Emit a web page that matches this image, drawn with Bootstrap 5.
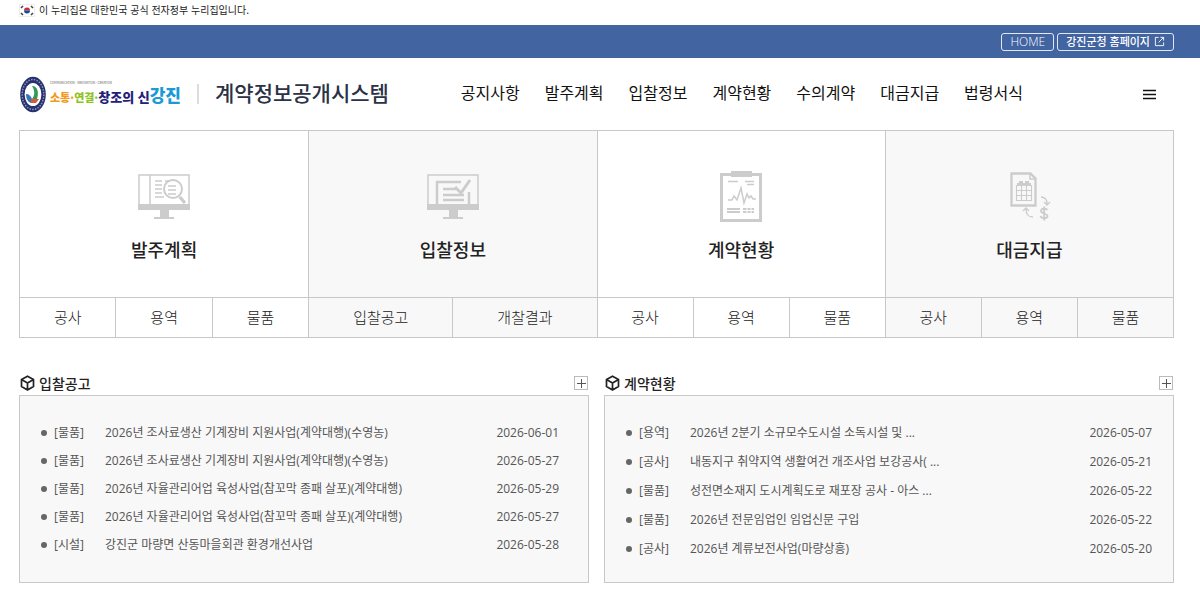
<!DOCTYPE html>
<html lang="ko">
<head>
<meta charset="utf-8">
<meta name="viewport" content="width=device-width, initial-scale=1">
<title>계약정보공개시스템</title>
<link href="https://cdn.jsdelivr.net/npm/bootstrap@5.3.0/dist/css/bootstrap.min.css" rel="stylesheet">
<style>
body{font-family:"Open Sans","Noto Sans CJK KR",sans-serif;color:#222;background:#fff}
a{color:inherit;text-decoration:none}
.wrap{padding-left:19px;padding-right:26px}
.gov-line{height:25px;font-size:10px;line-height:20px;color:#222}
.kr{font-family:"Noto Sans CJK KR",sans-serif}
.top-bar{background:#4264a1;height:33px;gap:3px}
.top-btn{border:1px solid #dfe8f8;border-radius:3px;height:18px;line-height:16px;color:#fff;padding:0 8px;font-size:11px;font-weight:500}
.top-btn.home{font-size:12px;font-weight:300}
.site-head{height:72px}
.brand{gap:3px}
.slogan{font-weight:900;line-height:20px;white-space:nowrap}
.slogan .s{font-size:11px}.slogan .m{font-size:13px}.slogan .l{font-size:17px}
.tagline{font-size:3px;line-height:4px;color:#555;white-space:nowrap}
.c-or{color:#f39a1e}.c-gr{color:#8dc21f}.c-nv{color:#232078}.c-sk{color:#1b9ad6}
.bar-sep{width:2px;height:20px;background:#ddd}
.site-name{font-size:21px;line-height:28px;font-weight:500;color:#2b3245;white-space:nowrap;padding-bottom:4px}
.main-nav{gap:25px;font-size:16px;line-height:24px;font-weight:400;color:#111;white-space:nowrap;padding-bottom:4px}
.menu-btn{margin-left:120px;margin-right:18px}
.board{border:1px solid #c8c8c8}
.tile{border-left:1px solid #c8c8c8}
.tile:first-child{border-left:0}
.tile:nth-child(even){background:#f8f8f8}
.tile-top{height:166px;padding-top:38px}
.tile-top span{font-size:18px;line-height:26px;font-weight:500;margin-top:13px}
.tile-sub{border-top:1px solid #c8c8c8;height:40px;font-size:15px;line-height:38px;color:#222;font-weight:300}
.tile-sub a{flex:1 1 0;text-align:center;border-left:1px solid #c8c8c8}
.tile-sub a:first-child{border-left:0}
.panels{padding-top:35px;gap:15px}
.panels section{flex:1 1 0;min-width:0}
.panel-head{height:22px;padding-bottom:2px}
.panel-head h2{font-size:14px;line-height:20px;font-weight:500;margin:0;color:#222}
.more{width:14px;height:14px;border:1px solid #bbb;background:#fff;padding:0;margin-right:1px}
.panel-box{border:1px solid #c8c8c8;background:#f8f8f8;min-height:188px;padding:23px 29px 0 21px;font-size:12px;color:#555;margin:0;list-style:none}
.panel-box li{display:flex;align-items:center;height:28px;line-height:28px}
.panel-box.wide{padding-top:22px;padding-right:21px}
.panel-box.wide li{height:29px;line-height:29px}
.panel-box li::before{content:"";width:6px;height:6px;border-radius:50%;background:#666;margin-right:7px;flex:none}
.kind{width:51px;flex:none}
.panel-box time{margin-left:auto}
</style>
</head>
<body>
<div class="wrap gov-line d-flex kr">
  <svg class="me-1 mt-1" width="16" height="13" viewBox="0 0 16 13" aria-hidden="true"><rect x=".5" y=".5" width="15" height="12" fill="#fff" stroke="#eee"/><path d="M5 6.500a3 3 0 0 1 6 0z" fill="#cd2e3a"/><path d="M5 6.500a3 3 0 0 0 6 0z" fill="#0f4c9c"/><path d="M2 4l2-2M12 2l2 2M2 9l2 2M12 11l2-2" stroke="#444" stroke-width="1.600"/></svg>
  <span>이 누리집은 대한민국 공식 전자정부 누리집입니다.</span>
</div>
<div class="wrap top-bar d-flex align-items-center justify-content-end">
  <a class="top-btn home" href="#">HOME</a>
  <a class="top-btn d-flex align-items-center" href="#">강진군청 홈페이지
    <svg class="ms-1" width="11" height="11" viewBox="0 0 12 12" fill="none" stroke="#fff"><path d="M5 1.500H1.500v9h9V7M7 1.500h3.500V5M10.500 1.500L5 7"/></svg></a>
</div>
<header class="wrap site-head d-flex align-items-center">
  <a class="brand d-flex align-items-center kr" href="#">
    <svg width="28" height="37" viewBox="0 0 28 37" aria-hidden="true"><ellipse cx="14" cy="18.500" rx="12.800" ry="17.800" fill="#27316f"/><ellipse cx="14" cy="18.500" rx="10.800" ry="15" fill="none" stroke="#8f97bd" stroke-width="1.400" stroke-dasharray="1.500 1.300"/><ellipse cx="14" cy="18.500" rx="8.400" ry="11.500" fill="#fff"/><path d="M13 10c6 0 7 7 5 13h-5c3-4 3-8 0-13z" fill="#2f9b57"/><path d="M7 18c3 0 5 2 6 5l-1 4c-3-1-5-4-5-9z" fill="#3677b8"/><path d="M12 23h8l-3 4h-5z" fill="#d9573c"/></svg>
    <span class="d-flex flex-column">
      <span class="tagline">COMMUNICATION · INNOVATION · CREATION</span>
      <span class="slogan"><span class="s c-or">소통·</span><span class="s c-gr">연결·</span><span class="m c-nv">창조의 신</span><span class="l c-sk">강진</span></span>
    </span>
  </a>
  <span class="bar-sep ms-3 me-3"></span>
  <a class="site-name kr" href="#">계약정보공개시스템</a>
  <nav class="main-nav d-flex kr ms-auto">
    <a href="#">공지사항</a><a href="#">발주계획</a><a href="#">입찰정보</a><a href="#">계약현황</a><a href="#">수의계약</a><a href="#">대금지급</a><a href="#">법령서식</a>
  </nav>
  <button class="menu-btn btn p-0 border-0 d-flex" type="button" aria-label="전체메뉴"><svg width="13" height="11" viewBox="0 0 13 11" stroke="#111" stroke-width="1.700"><path d="M0 1.500h13M0 5.500h13M0 9.500h13"/></svg></button>
</header>
<main class="wrap">
  <div class="board d-flex kr">
    <div class="tile col-3">
      <a class="tile-top d-flex flex-column align-items-center" href="#">
        <svg width="54" height="54" viewBox="0 0 54 54" fill="none" stroke="#ccc" stroke-width="2"><path d="M2 6h50v31H2zM13 6v31M18 12h7M18 16h7M18 20h7M18 24h7M18 28h9M28 12h4M31 17h8M31 21h8M31 25h8M42 28l5 6" stroke-width="1.500"/><circle cx="36" cy="20" r="9"/><path d="M43 28l5 6" stroke-width="3"/><path d="M1 35h52v6H1zM23 41h9v7h-9zM17 48h20v2H17z" fill="#ccc" stroke="none"/></svg>
        <span>발주계획</span></a>
      <div class="tile-sub d-flex"><a href="#">공사</a><a href="#">용역</a><a href="#">물품</a></div>
    </div>
    <div class="tile col-3">
      <a class="tile-top d-flex flex-column align-items-center" href="#">
        <svg width="54" height="54" viewBox="0 0 54 54" fill="none" stroke="#ccc" stroke-width="2"><path d="M2 6h50v31H2z" stroke-width="1.500"/><path d="M35 13H11v23M43 23v13M17 20h13M17 26h21M17 31h21" stroke-width="2.500"/><path d="M29 18l6 6 9-13" stroke-width="3"/><path d="M1 35h52v6H1zM23 41h9v7h-9zM17 48h20v2H17z" fill="#ccc" stroke="none"/></svg>
        <span>입찰정보</span></a>
      <div class="tile-sub d-flex"><a href="#">입찰공고</a><a href="#">개찰결과</a></div>
    </div>
    <div class="tile col-3">
      <a class="tile-top d-flex flex-column align-items-center" href="#">
        <svg width="54" height="54" viewBox="0 0 54 54" fill="none" stroke="#ccc"><path d="M7.500 5.500h39v46h-39z" stroke-width="3"/><path d="M17 2h21v6H17z" fill="#ccc" stroke="none"/><path d="M14 12.500h10M31 12.500h9M33 15.500h7" stroke-width="1.500"/><path d="M14 31h4l2-4 3 4 4-12 3 15 3-9 2 4 2-2 2 3h3" stroke-width="1.500"/><path d="M13 40h13M13 43h13M29 40h11M29 43h11" stroke-width="2"/><path d="M33 38v7M37 38v7" stroke="#fff"/></svg>
        <span>계약현황</span></a>
      <div class="tile-sub d-flex"><a href="#">공사</a><a href="#">용역</a><a href="#">물품</a></div>
    </div>
    <div class="tile col-3">
      <a class="tile-top d-flex flex-column align-items-center" href="#">
        <svg width="54" height="54" viewBox="0 0 54 54" fill="none" stroke="#ccc"><path d="M9.500 4.500h19l5 5v27h-24z" stroke-width="2.300"/><path d="M28 4v6h6" stroke-width="1.500"/><path d="M14.500 16.500h15v15h-15zM14.500 21.500h15M14.500 26.500h15M19.500 16v15M24.500 16v15" stroke-width="1.100"/><path d="M17 12h4v4h-4zM23 12h4v4h-4zM15 14h14v3H15z" fill="#ccc" stroke="none"/><path d="M39 28c4 0 6 3 6 7M42 33l3 3 3-3M31 48c-5 0-7-3-7-8M21 42l3-3 3 3" stroke-width="1.300"/><path d="M45.500 41c-1-2-6.500-2-6.500 1s6.500 2 6.500 5-6 3-7 0M42.200 37.500v14" stroke-width="1.800"/></svg>
        <span>대금지급</span></a>
      <div class="tile-sub d-flex"><a href="#">공사</a><a href="#">용역</a><a href="#">물품</a></div>
    </div>
  </div>
  <div class="panels d-flex">
    <section>
      <div class="panel-head d-flex align-items-center justify-content-between">
        <div class="d-flex align-items-center"><svg class="me-1" width="16" height="16" viewBox="0 0 16 16" fill="none" stroke="#222" stroke-width="1.700" stroke-linejoin="round"><path d="M8.500 1.200l6 3.200v7.200l-6 3.400-6-3.400V4.400zM2.500 4.600l6 3.300 6-3.300M8.500 8v7"/></svg><h2 class="kr">입찰공고</h2></div>
        <button class="more d-flex" type="button" aria-label="입찰공고 더보기"><svg width="12" height="12" viewBox="0 0 12 12" stroke="#555"><path d="M2 6.500h9M6.500 2v9"/></svg></button>
      </div>
      <ul class="panel-box">
        <li><span class="kind">[물품]</span><a href="#">2026년 조사료생산 기계장비 지원사업(계약대행)(수영농)</a><time>2026-06-01</time></li>
        <li><span class="kind">[물품]</span><a href="#">2026년 조사료생산 기계장비 지원사업(계약대행)(수영농)</a><time>2026-05-27</time></li>
        <li><span class="kind">[물품]</span><a href="#">2026년 자율관리어업 육성사업(참꼬막 종패 살포)(계약대행)</a><time>2026-05-29</time></li>
        <li><span class="kind">[물품]</span><a href="#">2026년 자율관리어업 육성사업(참꼬막 종패 살포)(계약대행)</a><time>2026-05-27</time></li>
        <li><span class="kind">[시설]</span><a href="#">강진군 마량면 산동마을회관 환경개선사업</a><time>2026-05-28</time></li>
      </ul>
    </section>
    <section>
      <div class="panel-head d-flex align-items-center justify-content-between">
        <div class="d-flex align-items-center"><svg class="me-1" width="16" height="16" viewBox="0 0 16 16" fill="none" stroke="#222" stroke-width="1.700" stroke-linejoin="round"><path d="M8.500 1.200l6 3.200v7.200l-6 3.400-6-3.400V4.400zM2.500 4.600l6 3.300 6-3.300M8.500 8v7"/></svg><h2 class="kr">계약현황</h2></div>
        <button class="more d-flex" type="button" aria-label="계약현황 더보기"><svg width="12" height="12" viewBox="0 0 12 12" stroke="#555"><path d="M2 6.500h9M6.500 2v9"/></svg></button>
      </div>
      <ul class="panel-box wide">
        <li><span class="kind">[용역]</span><a href="#">2026년 2분기 소규모수도시설 소독시설 및 ...</a><time>2026-05-07</time></li>
        <li><span class="kind">[공사]</span><a href="#">내동지구 취약지역 생활여건 개조사업 보강공사( ...</a><time>2026-05-21</time></li>
        <li><span class="kind">[물품]</span><a href="#">성전면소재지 도시계획도로 재포장 공사 - 아스 ...</a><time>2026-05-22</time></li>
        <li><span class="kind">[물품]</span><a href="#">2026년 전문임업인 임업신문 구입</a><time>2026-05-22</time></li>
        <li><span class="kind">[공사]</span><a href="#">2026년 계류보전사업(마량상흥)</a><time>2026-05-20</time></li>
      </ul>
    </section>
  </div>
</main>
<script src="https://cdn.jsdelivr.net/npm/bootstrap@5.3.0/dist/js/bootstrap.bundle.min.js"></script>
</body>
</html>
